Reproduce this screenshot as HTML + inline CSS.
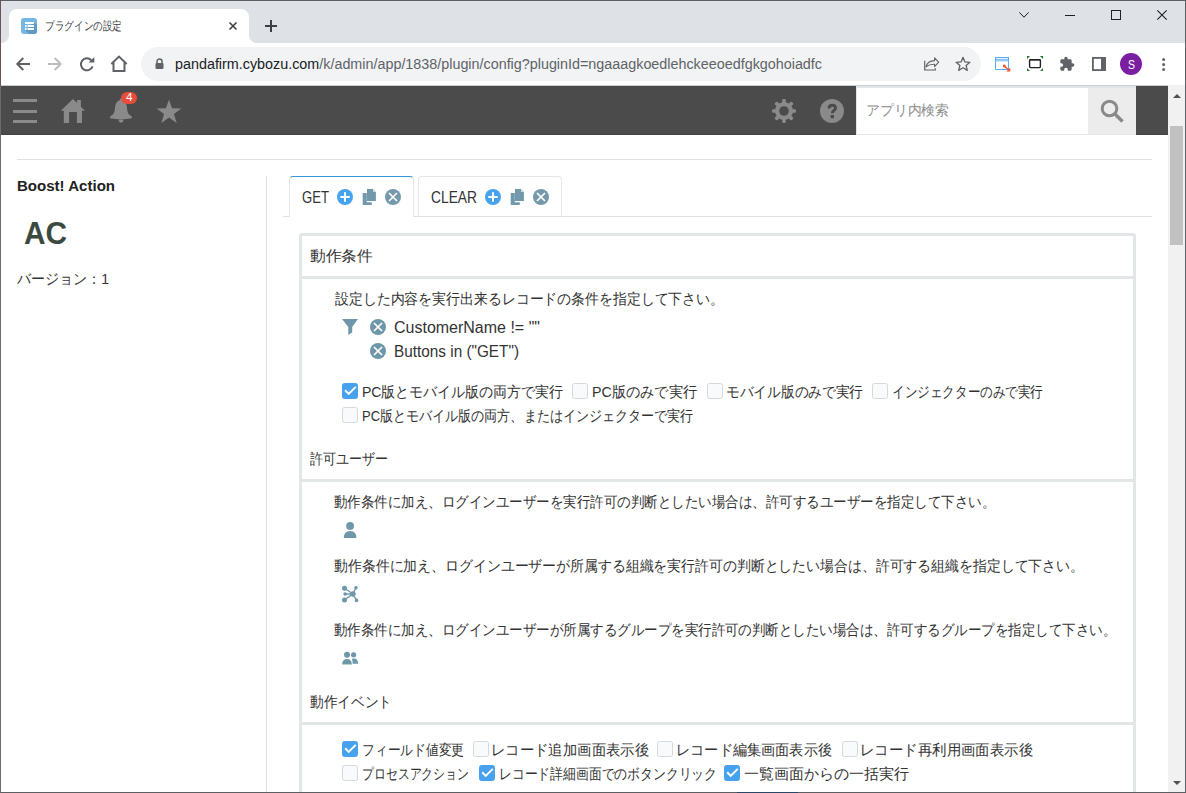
<!DOCTYPE html>
<html><head><meta charset="utf-8">
<style>
*{box-sizing:border-box}
html,body{margin:0;padding:0;width:1186px;height:793px;overflow:hidden;background:#fff;font-family:"Liberation Sans",sans-serif;color:#333}
.a{position:absolute}
.fit{position:absolute;white-space:nowrap;line-height:1}
.fit>span{display:inline-block;transform-origin:0 0}
#frame{position:absolute;left:0;top:0;width:1186px;height:793px;border:1px solid #5c5f61;border-left-color:#6b6b6b;pointer-events:none;z-index:50}
#titlebar{left:0;top:0;width:1186px;height:43px;background:#dee1e6}
#tab{left:9px;top:9px;width:240px;height:34px;background:#fff;border-radius:8px 8px 0 0}
#toolbar{left:0;top:43px;width:1186px;height:43px;background:#fff}
#omni{left:141px;top:47px;width:840px;height:34px;border-radius:17px;background:#f1f3f4}
#khead{left:0;top:86px;width:1168px;height:49px;background:#4b4b4b;border-bottom:1px solid #444}
#scroll{left:1168px;top:85px;width:18px;height:708px;background:#f1f1f1}
.line{background:#dfe1e2}
.pb{background:#e2e6e7}
.j{font-size:15px;color:#333}
.cb{position:absolute;width:16px;height:16px;border:1px solid #d3d9de;border-radius:2.5px;background:#f8fafb}
.cb.on{background:#47a2ee;border-color:#47a2ee}
.cb svg{left:-1px;top:-1px}
svg{position:absolute;overflow:visible}
</style></head><body>
<div id="frame"></div><div class="a" style="left:737px;top:792px;width:61px;height:1px;background:#2a4866;z-index:51"></div><div class="a" style="left:0;top:0;width:1px;height:86px;background:#6a5553;z-index:51"></div>

<!-- ===== chrome ===== -->
<div id="titlebar" class="a"></div>
<div id="tab" class="a"></div>
<!-- tab bottom flares -->
<div class="a" style="left:1px;top:35px;width:8px;height:8px;background:#fff"></div>
<div class="a" style="left:1px;top:27px;width:8px;height:16px;background:#dee1e6;border-radius:0 0 8px 0"></div>
<div class="a" style="left:249px;top:35px;width:8px;height:8px;background:#fff"></div>
<div class="a" style="left:249px;top:27px;width:8px;height:16px;background:#dee1e6;border-radius:0 0 0 8px"></div>
<div id="toolbar" class="a"></div>
<div id="omni" class="a"></div>

<!-- favicon -->
<svg style="left:21px;top:18px" width="16" height="16" viewBox="0 0 16 16"><defs><clipPath id="fc"><rect width="16" height="16" rx="3"/></clipPath></defs><g clip-path="url(#fc)"><rect width="16" height="16" fill="#74b6e4"/><path d="M13 4L16 7V16H8L4 12Z" fill="#5f9ac4"/></g><rect x="4" y="4" width="9" height="2" fill="#fff"/><rect x="4" y="7" width="1.6" height="2" fill="#fff"/><rect x="6.5" y="7" width="6.5" height="2" fill="#fff"/><rect x="4" y="10" width="1.6" height="2" fill="#fff"/><rect x="6.5" y="10" width="6.5" height="2" fill="#fff"/></svg>
<div class="fit" style="left:45px;top:20px;width:77px;font-size:12px;color:#3c4043"><span>プラグインの設定</span></div>
<svg style="left:229px;top:22px" width="8" height="8" viewBox="0 0 8 8"><path d="M0.5 0.5L7.5 7.5M7.5 0.5L0.5 7.5" stroke="#3c4043" stroke-width="1.6"/></svg>
<svg style="left:265px;top:20px" width="12" height="12" viewBox="0 0 12 12"><path d="M6 0V12M0 6H12" stroke="#3c4043" stroke-width="2"/></svg>
<!-- window controls -->
<svg style="left:1019px;top:12px" width="10" height="6" viewBox="0 0 10 6"><path d="M0.4 0.4L5 5.2L9.6 0.4" fill="none" stroke="#1f1f1f" stroke-width="1"/></svg>
<div class="a" style="left:1065px;top:15px;width:10px;height:1px;background:#1f1f1f"></div>
<div class="a" style="left:1111px;top:10px;width:10px;height:10px;border:1px solid #1f1f1f"></div>
<svg style="left:1157px;top:10px" width="10" height="10" viewBox="0 0 10 10"><path d="M0.3 0.3L9.7 9.7M9.7 0.3L0.3 9.7" stroke="#1f1f1f" stroke-width="1.1"/></svg>

<!-- nav icons -->
<svg style="left:15px;top:56px" width="16" height="16" viewBox="0 0 16 16"><path d="M15 8H2.5M8.3 2L2.3 8L8.3 14" fill="none" stroke="#5f6368" stroke-width="2"/></svg>
<svg style="left:47px;top:56px" width="16" height="16" viewBox="0 0 16 16"><path d="M1 8H13.5M7.7 2L13.7 8L7.7 14" fill="none" stroke="#babcbe" stroke-width="2"/></svg>
<svg style="left:80px;top:57px" width="15" height="14" viewBox="0 0 15 14"><path d="M12.6 9.3A6 6 0 1 1 11.3 3.2" fill="none" stroke="#5f6368" stroke-width="2"/><path d="M8.6 5.6H14.3V0Z" fill="#5f6368"/></svg>
<svg style="left:110px;top:55px" width="18" height="17" viewBox="0 0 18 17"><path d="M1.3 9L9 1.6L16.7 9M3.5 7.2V16H14.5V7.2" fill="none" stroke="#5f6368" stroke-width="2" stroke-linejoin="miter"/></svg>
<svg style="left:155px;top:58px" width="9" height="11" viewBox="0 0 9 11"><path d="M2 5V3.5A2.5 2.5 0 0 1 7 3.5V5" fill="none" stroke="#5f6368" stroke-width="1.5"/><rect x="0.5" y="5" width="8" height="6" rx="1" fill="#5f6368"/></svg>
<div class="fit" style="left:175px;top:57px;width:647px;font-size:14px;color:#202124"><span>pandafirm.cybozu.com<span style="color:#5f6368">/k/admin/app/1838/plugin/config?pluginId=ngaaagkoedlehckeeoedfgkgohoiadfc</span></span></div>
<!-- omnibox right icons -->
<svg style="left:924px;top:57px" width="16" height="14" viewBox="0 0 16 14"><path d="M0.7 3.8V13H11.3V11.2" fill="none" stroke="#5f6368" stroke-width="1.2"/><path d="M2 9.8Q3.5 3.8 10.6 3.6V0.8L14.6 5.2L10.6 9.6V7.2Q5.5 7 2 9.8Z" fill="none" stroke="#5f6368" stroke-width="1.1" stroke-linejoin="round"/></svg>
<svg style="left:955px;top:56px" width="16" height="16" viewBox="0 0 16 16"><path d="M8 1.3L9.9 5.9L14.9 6.3L11.1 9.5L12.3 14.4L8 11.8L3.7 14.4L4.9 9.5L1.1 6.3L6.1 5.9Z" fill="none" stroke="#5f6368" stroke-width="1.3" stroke-linejoin="round"/></svg>
<!-- extensions -->
<svg style="left:995px;top:57px" width="16" height="15" viewBox="0 0 16 15"><rect x="0.5" y="0.5" width="13" height="12" fill="#fff" stroke="#5aaef0" stroke-width="1"/><path d="M0.5 2.3H13.5M0.5 3.8H13.5" stroke="#5aaef0" stroke-width="0.9"/><path d="M9.3 9L14.5 13.8" stroke="#f0553a" stroke-width="1.5"/><circle cx="9.3" cy="9" r="1.4" fill="#f0553a"/><path d="M15.3 14.6L15.3 10.6L11.3 14.6Z" fill="#f0553a"/></svg>
<svg style="left:1027px;top:56px" width="16" height="15" viewBox="0 0 16 15"><path d="M0 0H3L0 3ZM16 0H13L16 3ZM0 15H3L0 12ZM16 15H13L16 12Z" fill="#1e7a2a"/><rect x="2.6" y="3.6" width="10.8" height="8" rx="1" fill="none" stroke="#202124" stroke-width="1.4"/><rect x="2.6" y="3" width="10.8" height="1.6" fill="#202124"/></svg>
<svg style="left:1059px;top:56px" width="16" height="16" viewBox="0 0 24 24"><path d="M20.5 11H19V7c0-1.1-.9-2-2-2h-4V3.5C13 2.12 11.88 1 10.5 1S8 2.12 8 3.5V5H4c-1.1 0-1.99.9-1.99 2v3.8H3.5c1.49 0 2.7 1.21 2.7 2.7s-1.21 2.7-2.7 2.7H2V20c0 1.1.9 2 2 2h3.8v-1.5c0-1.49 1.21-2.7 2.7-2.7 1.49 0 2.7 1.21 2.7 2.7V22H17c1.1 0 2-.9 2-2v-4h1.5c1.38 0 2.5-1.12 2.5-2.5S21.88 11 20.5 11z" fill="#5f6368"/></svg>
<svg style="left:1092px;top:57px" width="14" height="14" viewBox="0 0 14 14"><rect x="0.9" y="0.9" width="12.2" height="12.2" fill="none" stroke="#5f6368" stroke-width="1.8"/><rect x="9" y="1" width="4" height="12" fill="#5f6368"/></svg>
<div class="a" style="left:1120px;top:53px;width:22px;height:22px;border-radius:11px;background:#7b1fa2"></div>
<div class="fit" style="left:1127.5px;top:59px;width:7px;font-size:12px;color:#fff"><span>S</span></div>
<svg style="left:1162px;top:57px" width="4" height="15" viewBox="0 0 4 15"><circle cx="1.6" cy="2.5" r="1.5" fill="#5f6368"/><circle cx="1.6" cy="7.5" r="1.5" fill="#5f6368"/><circle cx="1.6" cy="12.5" r="1.5" fill="#5f6368"/></svg>

<!-- ===== kintone header ===== -->
<div id="khead" class="a"></div>
<div class="a" style="left:13px;top:99px;width:24px;height:3px;background:#8a8a8a"></div>
<div class="a" style="left:13px;top:110px;width:24px;height:3px;background:#8a8a8a"></div>
<div class="a" style="left:13px;top:120px;width:24px;height:3px;background:#8a8a8a"></div>
<svg style="left:61px;top:98px" width="24" height="26" viewBox="0 0 24 26"><path d="M-0.2 12.8L12 0.9L16 4.9V2H19.9V8.8L24 12.8H21V25H15.9V14.1H8.1V25H2.8V12.8Z" fill="#8a8a8a"/></svg>
<svg style="left:109px;top:98px" width="24" height="26" viewBox="0 0 24 26"><path d="M12 0.5Q13.2 0.5 13.3 2.2Q17.8 3.8 18 10Q18.3 16 21.5 17.6Q23.2 18.4 23 20.3Q18 21.3 12 21.3Q6 21.3 1 20.3Q0.8 18.4 2.5 17.6Q5.7 16 6 10Q6.2 3.8 10.7 2.2Q10.8 0.5 12 0.5Z" fill="#8a8a8a"/><path d="M9.5 21.4H14.5Q14 24.6 12 24.6Q10 24.6 9.5 21.4Z" fill="#8a8a8a"/></svg>
<div class="a" style="left:121px;top:92px;width:16px;height:12px;border-radius:6px;background:#e74c3c"></div>
<div class="fit" style="left:126px;top:92px;width:6.5px;font-size:11px;color:#fff"><span>4</span></div>
<svg style="left:157px;top:99px" width="25" height="25" viewBox="0 0 25 25"><path d="M12.00 0.40 L15.06 9.19 L24.36 9.38 L16.95 15.01 L19.64 23.92 L12.00 18.60 L4.36 23.92 L7.05 15.01 L-0.36 9.38 L8.94 9.19Z" fill="#8a8a8a"/></svg>
<svg style="left:772px;top:99px" width="24" height="24" viewBox="0 0 24 24"><g fill="#8a8a8a"><circle cx="12" cy="12" r="9"/><rect x="10.2" y="0" width="3.6" height="24" rx="1.2" transform="rotate(0 12 12)"/><rect x="10.2" y="0" width="3.6" height="24" rx="1.2" transform="rotate(45 12 12)"/><rect x="10.2" y="0" width="3.6" height="24" rx="1.2" transform="rotate(90 12 12)"/><rect x="10.2" y="0" width="3.6" height="24" rx="1.2" transform="rotate(135 12 12)"/></g><circle cx="12" cy="12" r="4.8" fill="#4b4b4b"/></svg>
<svg style="left:820px;top:99px" width="24" height="24" viewBox="0 0 24 24"><circle cx="12" cy="12" r="12" fill="#8a8a8a"/><path d="M9 9.6Q9 6.2 12.3 6.2Q15.5 6.2 15.5 9Q15.5 10.6 13.7 11.7Q12.4 12.5 12.4 14.2" fill="none" stroke="#4b4b4b" stroke-width="2.9"/><rect x="10.6" y="16" width="3.4" height="3.2" fill="#4b4b4b"/></svg>
<div class="a" style="left:856px;top:86px;width:280px;height:49px;background:#e3e6e8"></div><div class="a" style="left:857px;top:88px;width:231px;height:46px;background:#fff"></div>
<div class="fit" style="left:866px;top:103px;width:83px;font-size:14px;color:#8c8c8c"><span>アプリ内検索</span></div>
<div class="a" style="left:1088px;top:88px;width:48px;height:46px;background:#ececec"></div><div class="a" style="left:0;top:85px;width:1168px;height:1px;background:#c9cbce"></div>
<svg style="left:1100px;top:99px" width="24" height="24" viewBox="0 0 24 24"><circle cx="9.5" cy="9.5" r="7.3" fill="none" stroke="#8a8a8a" stroke-width="3"/><path d="M15 15L22.5 22.5" stroke="#8a8a8a" stroke-width="3.4"/></svg>

<!-- scrollbar -->
<div id="scroll" class="a"></div>
<svg style="left:1173px;top:94px" width="8" height="4" viewBox="0 0 8 4"><path d="M0 4H8L4 0Z" fill="#505050"/></svg>
<div class="a" style="left:1170px;top:126px;width:13px;height:119px;background:#c1c1c1"></div>
<svg style="left:1173px;top:781px" width="8" height="4" viewBox="0 0 8 4"><path d="M0 0H8L4 4Z" fill="#505050"/></svg>

<!-- ===== page ===== -->
<div class="a line" style="left:17px;top:159px;width:1135px;height:1px"></div>
<div class="fit" style="left:17px;top:179px;width:98px;font-size:14px;font-weight:bold;color:#222"><span>Boost! Action</span></div>
<div class="fit" style="left:24px;top:217px;width:43px;font-size:32px;font-weight:bold;color:#3b4a41"><span>AC</span></div>
<div class="fit j" style="left:17px;top:271px;width:92px"><span>バージョン：1</span></div>
<div class="a line" style="left:266px;top:176px;width:1px;height:617px"></div>

<!-- tabs -->
<div class="a line" style="left:283px;top:216px;width:869px;height:1px"></div>
<div class="a" style="left:289px;top:176px;width:125px;height:41px;background:#fff;border:1px solid #e3e6e8;border-top:1px solid #3498db;border-bottom:none;border-radius:4px 4px 0 0"></div>
<div class="a" style="left:418px;top:176px;width:144px;height:40px;background:#fff;border:1px solid #e3e6e8;border-bottom:none;border-radius:4px 4px 0 0"></div>
<div class="fit" style="left:302px;top:190px;width:27px;font-size:16px;color:#333"><span>GET</span></div>
<div class="fit" style="left:431px;top:190px;width:46px;font-size:16px;color:#333"><span>CLEAR</span></div>

<!-- panel -->
<div class="a" style="left:299px;top:233px;width:837px;height:600px;border:3px solid #e2e6e7;border-radius:3px"></div>
<div class="a pb" style="left:299px;top:276px;width:837px;height:3px"></div>
<div class="a pb" style="left:299px;top:479px;width:837px;height:3px"></div>
<div class="a pb" style="left:299px;top:722px;width:837px;height:3px"></div>

<div class="fit j" style="left:310px;top:248px;width:63px"><span>動作条件</span></div>
<div class="fit j" style="left:335px;top:291px;width:389px"><span>設定した内容を実行出来るレコードの条件を指定して下さい。</span></div>
<div class="fit" style="left:394px;top:320px;width:146px;font-size:16px;color:#333"><span>CustomerName != ""</span></div>
<div class="fit" style="left:394px;top:344px;width:125px;font-size:16px;color:#333"><span>Buttons in ("GET")</span></div>

<div class="cb on" style="left:342px;top:383px"><svg width="16" height="16" viewBox="0 0 16 16"><path d="M3.2 7.3L6.7 10.9L13.8 3.9" fill="none" stroke="#fff" stroke-width="2"/></svg></div>
<div class="fit j" style="left:362px;top:384px;width:201px"><span>PC版とモバイル版の両方で実行</span></div>
<div class="cb" style="left:572px;top:383px"></div>
<div class="fit j" style="left:592px;top:384px;width:105px"><span>PC版のみで実行</span></div>
<div class="cb" style="left:707px;top:383px"></div>
<div class="fit j" style="left:726px;top:384px;width:137px"><span>モバイル版のみで実行</span></div>
<div class="cb" style="left:872px;top:383px"></div>
<div class="fit j" style="left:892px;top:384px;width:151px"><span>インジェクターのみで実行</span></div>
<div class="cb" style="left:342px;top:407px"></div>
<div class="fit j" style="left:362px;top:408px;width:331px"><span>PC版とモバイル版の両方、またはインジェクターで実行</span></div>

<div class="fit j" style="left:310px;top:451px;width:78px"><span>許可ユーザー</span></div>
<div class="fit j" style="left:334px;top:494px;width:661px"><span>動作条件に加え、ログインユーザーを実行許可の判断としたい場合は、許可するユーザーを指定して下さい。</span></div>
<div class="fit j" style="left:334px;top:558px;width:750px"><span>動作条件に加え、ログインユーザーが所属する組織を実行許可の判断としたい場合は、許可する組織を指定して下さい。</span></div>
<div class="fit j" style="left:334px;top:622px;width:782px"><span>動作条件に加え、ログインユーザーが所属するグループを実行許可の判断としたい場合は、許可するグループを指定して下さい。</span></div>
<div class="fit j" style="left:310px;top:694px;width:82px"><span>動作イベント</span></div>

<div class="cb on" style="left:342px;top:741px"><svg width="16" height="16" viewBox="0 0 16 16"><path d="M3.2 7.3L6.7 10.9L13.8 3.9" fill="none" stroke="#fff" stroke-width="2"/></svg></div>
<div class="fit j" style="left:362px;top:742px;width:102px"><span>フィールド値変更</span></div>
<div class="cb" style="left:473px;top:741px"></div>
<div class="fit j" style="left:491px;top:742px;width:158px"><span>レコード追加画面表示後</span></div>
<div class="cb" style="left:657px;top:741px"></div>
<div class="fit j" style="left:676px;top:742px;width:156px"><span>レコード編集画面表示後</span></div>
<div class="cb" style="left:842px;top:741px"></div>
<div class="fit j" style="left:860px;top:742px;width:173px"><span>レコード再利用画面表示後</span></div>
<div class="cb" style="left:342px;top:765px"></div>
<div class="fit j" style="left:362px;top:766px;width:107px"><span>プロセスアクション</span></div>
<div class="cb on" style="left:479px;top:765px"><svg width="16" height="16" viewBox="0 0 16 16"><path d="M3.2 7.3L6.7 10.9L13.8 3.9" fill="none" stroke="#fff" stroke-width="2"/></svg></div>
<div class="fit j" style="left:499px;top:766px;width:218px"><span>レコード詳細画面でのボタンクリック</span></div>
<div class="cb on" style="left:724px;top:765px"><svg width="16" height="16" viewBox="0 0 16 16"><path d="M3.2 7.3L6.7 10.9L13.8 3.9" fill="none" stroke="#fff" stroke-width="2"/></svg></div>
<div class="fit j" style="left:744px;top:766px;width:165px"><span>一覧画面からの一括実行</span></div>


<!-- tab icons -->
<svg style="left:337px;top:189px" width="16" height="16" viewBox="0 0 16 16"><circle cx="8" cy="8" r="8" fill="#45a3ee"/><path d="M3.3 8H12.7M8 3.3V12.7" stroke="#fff" stroke-width="2"/></svg>
<svg style="left:362px;top:189px" width="14" height="16" viewBox="0 0 14 16"><path d="M0.7 4H4.8V13.2H9.8V16H0.7Z" fill="#7299ab"/><path d="M5 0H11L13.9 2.9V12H5Z" fill="#7299ab"/><path d="M11 0V2.9H13.9" fill="#fff" opacity="0.6"/></svg>
<svg style="left:385px;top:189px" width="16" height="16" viewBox="0 0 16 16"><circle cx="8" cy="8" r="8" fill="#7599ab"/><path d="M4 4L12 12M12 4L4 12" stroke="#fff" stroke-width="1.7"/></svg>
<svg style="left:485px;top:189px" width="16" height="16" viewBox="0 0 16 16"><circle cx="8" cy="8" r="8" fill="#45a3ee"/><path d="M3.3 8H12.7M8 3.3V12.7" stroke="#fff" stroke-width="2"/></svg>
<svg style="left:510px;top:189px" width="14" height="16" viewBox="0 0 14 16"><path d="M0.7 4H4.8V13.2H9.8V16H0.7Z" fill="#7299ab"/><path d="M5 0H11L13.9 2.9V12H5Z" fill="#7299ab"/><path d="M11 0V2.9H13.9" fill="#fff" opacity="0.6"/></svg>
<svg style="left:533px;top:189px" width="16" height="16" viewBox="0 0 16 16"><circle cx="8" cy="8" r="8" fill="#7599ab"/><path d="M4 4L12 12M12 4L4 12" stroke="#fff" stroke-width="1.7"/></svg>
<!-- filter + condition icons -->
<svg style="left:342px;top:319px" width="16" height="16" viewBox="0 0 16 16"><path d="M0 0H16L10.2 7.9V13.6L6.3 16V7.9Z" fill="#6e97a9"/></svg>
<svg style="left:370px;top:319px" width="16" height="16" viewBox="0 0 16 16"><circle cx="8" cy="8" r="8" fill="#6e97a9"/><path d="M4 4L12 12M12 4L4 12" stroke="#fff" stroke-width="1.7"/></svg>
<svg style="left:370px;top:343px" width="16" height="16" viewBox="0 0 16 16"><circle cx="8" cy="8" r="8" fill="#6e97a9"/><path d="M4 4L12 12M12 4L4 12" stroke="#fff" stroke-width="1.7"/></svg>
<!-- user / org / group -->
<svg style="left:343px;top:521px" width="14" height="18" viewBox="0 0 14 18"><circle cx="7.1" cy="4.9" r="3.9" fill="#6e97a9"/><path d="M0.8 17Q0.8 10.1 7.1 10.1Q13.4 10.1 13.4 17Z" fill="#6e97a9"/></svg>
<svg style="left:341px;top:585px" width="18" height="18" viewBox="0 0 18 18"><g fill="#6e97a9" stroke="#6e97a9" stroke-width="1.3"><path d="M3.5 3.3L12 9M4.1 9H12M3.5 14.9L12 9M15 2.8L12 9L15.5 15.4" fill="none"/><circle cx="12" cy="9" r="2.7" stroke="none"/><circle cx="3.5" cy="3.3" r="2.5" stroke="none"/><circle cx="4.1" cy="9" r="1.8" stroke="none"/><circle cx="3.5" cy="14.9" r="2.5" stroke="none"/><circle cx="15" cy="2.8" r="1.8" stroke="none"/><circle cx="15.5" cy="15.4" r="1.8" stroke="none"/></g></svg>
<svg style="left:342px;top:651px" width="17" height="14" viewBox="0 0 17 14"><g fill="#6e97a9"><circle cx="5" cy="3.8" r="3"/><path d="M0.2 13.6Q0.2 8.1 5 8.1Q9.8 8.1 9.8 13.6Z"/><circle cx="11.6" cy="3.8" r="2.6"/><path d="M9.8 7.7Q10.6 7.4 11.6 7.4Q16.1 7.4 16.1 12.7H10.6Q10.6 9.2 9.8 7.7Z"/></g></svg>

<script>
document.querySelectorAll('.fit').forEach(function(e){
  var w=parseFloat(e.style.width), s=e.firstElementChild, r=s.getBoundingClientRect().width;
  if(w&&r) s.style.transform='scaleX('+(w/r)+')';
});
</script>
</body></html>
